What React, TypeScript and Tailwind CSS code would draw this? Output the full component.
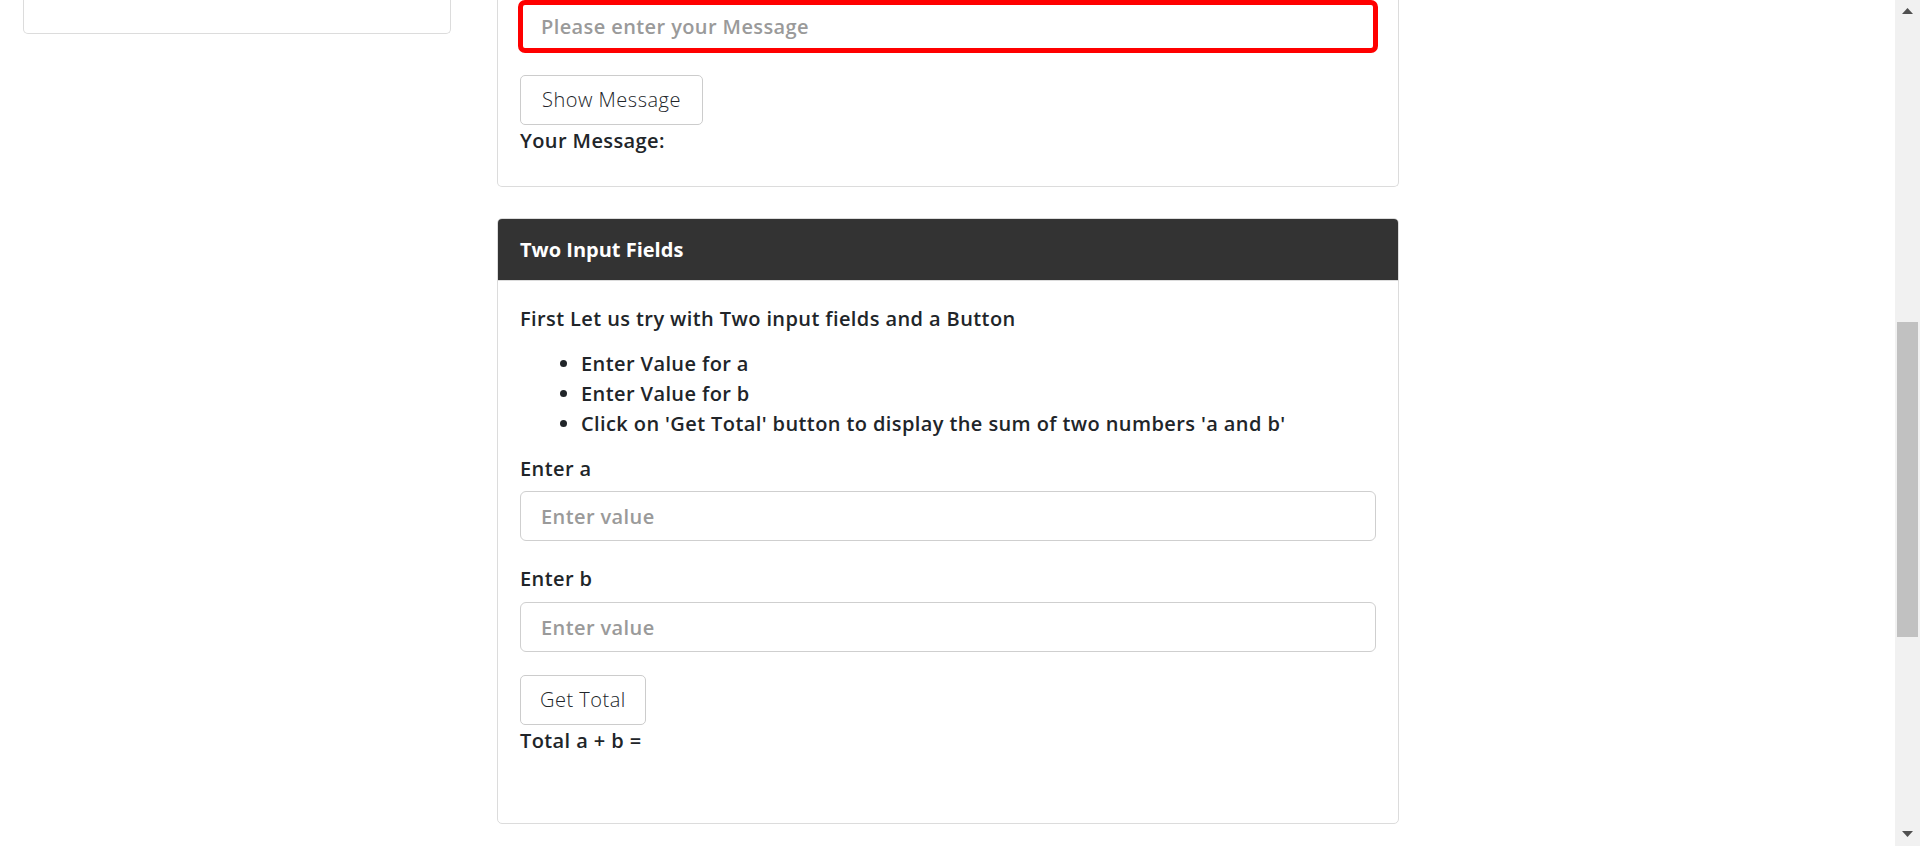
import React from 'react';

const inputClass =
  "block w-full h-[50px] rounded-[6px] border border-[#cfcfcf] bg-white px-[20px] text-[20px] font-semibold tracking-[0.4px] text-[#333] placeholder-[#9a9a9a] outline-none";

const buttonClass =
  "h-[50px] self-start rounded-[5px] border border-[#cccccc] bg-white px-[19px] text-[20px] font-light tracking-[0.5px] text-[#212529]";

const ScrollBar = () => (
  <div className="flex w-[25px] shrink-0 flex-col items-center bg-[#f1f1f1]">
    <div className="flex h-[22px] items-center">
      <svg width="11" height="6" viewBox="0 0 11 6">
        <path d="M0 6 L5.5 0 L11 6 Z" fill="#505050" />
      </svg>
    </div>
    <div className="mt-[300px] h-[315px] w-[21px] bg-[#c1c1c1]" />
    <div className="flex-1" />
    <div className="flex h-[24px] items-center">
      <svg width="11" height="6" viewBox="0 0 11 6">
        <path d="M0 0 L11 0 L5.5 6 Z" fill="#505050" />
      </svg>
    </div>
  </div>
);

export default function App() {
  return (
    <div className="flex h-[846px] w-full overflow-hidden bg-white font-['Open_Sans',sans-serif] text-[20px] leading-[30px] tracking-[0.4px] text-[#212529]">
      <div className="flex flex-1 items-start pl-[23px]">
        {/* sidebar card, scrolled up */}
        <aside className="h-[34px] w-[428px] shrink-0 rounded-b-[5px] border border-t-0 border-[#dcdcdc]" />

        <main className="ml-[46px] flex w-[902px] shrink-0 flex-col">
          {/* message card */}
          <section className="flex flex-col rounded-b-[5px] border border-t-0 border-[#dcdcdc] px-[22px] pb-[30px]">
            <input
              type="text"
              placeholder="Please enter your Message"
              className="-ml-[2px] block h-[53px] w-[calc(100%+4px)] rounded-[7px] border-[5px] border-[#ff0000] bg-white px-[18px] text-[20px] font-semibold tracking-[0.4px] placeholder-[#9a9a9a] outline-none"
            />
            <button className={`mt-[22px] ${buttonClass} px-[21px]`}>Show Message</button>
            <p className="mt-[1px] font-semibold">Your Message:</p>
          </section>

          {/* two input fields */}
          <section className="mt-[31px] overflow-hidden rounded-[5px] border border-[#dcdcdc]">
            <div className="flex h-[62px] items-center border-b border-[#dcdcdc] bg-[#333333] px-[22px]">
              <h2 className="font-bold tracking-normal text-white">Two Input Fields</h2>
            </div>
            <div className="flex flex-col px-[22px] pt-[23px] pb-[67px] font-semibold">
              <p className="mb-[15px]">First Let us try with Two input fields and a Button</p>
              <ul className="mb-[15px] list-disc pl-[61px]">
                <li>Enter Value for a</li>
                <li>Enter Value for b</li>
                <li>Click on 'Get Total' button to display the sum of two numbers 'a and b'</li>
              </ul>
              <label className="mb-[7px]">Enter a</label>
              <input type="text" placeholder="Enter value" className={inputClass} />
              <label className="mt-[23px] mb-[8px]">Enter b</label>
              <input type="text" placeholder="Enter value" className={inputClass} />
              <button className={`mt-[23px] ${buttonClass}`}>Get Total</button>
              <p className="mt-[1px]">Total a + b =</p>
            </div>
          </section>
        </main>
      </div>
      <ScrollBar />
    </div>
  );
}
